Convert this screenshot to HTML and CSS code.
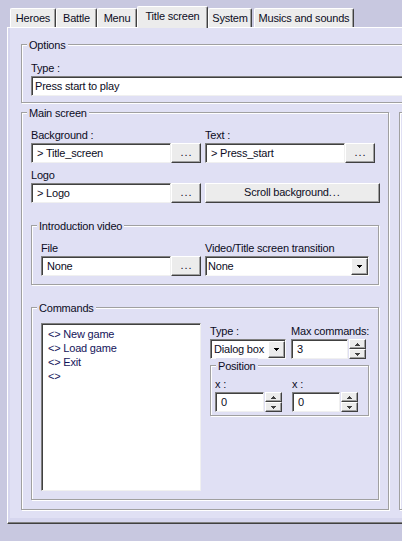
FILE: index.html
```html
<!DOCTYPE html>
<html lang="en">
<head>
<meta charset="utf-8">
<title>Title screen</title>
<link rel="stylesheet" href="styles.css">
</head>
<body>
<div class="window">
  <div class="tabs">
    <div class="tab t-heroes">Heroes</div>
    <div class="tab t-battle">Battle</div>
    <div class="tab t-menu">Menu</div>
    <div class="tab t-title sel">Title screen</div>
    <div class="tab t-system">System</div>
    <div class="tab t-musics">Musics and sounds</div>
  </div>
  <div class="panel">
    <div class="group g-options">
      <span class="legend">Options</span>
      <div class="label">Type :</div>
      <div class="input plain wide">Press start to play</div>
    </div>
    <div class="mainrow">
      <div class="group g-main">
        <span class="legend">Main screen</span>
        <div class="grid2">
          <div class="field">
            <div class="label">Background :</div>
            <div class="picker"><div class="input pick">&gt; Title_screen</div><div class="btn dots">...</div></div>
          </div>
          <div class="field">
            <div class="label">Text :</div>
            <div class="picker"><div class="input pick">&gt; Press_start</div><div class="btn dots">...</div></div>
          </div>
          <div class="field">
            <div class="label">Logo</div>
            <div class="picker"><div class="input pick">&gt; Logo</div><div class="btn dots">...</div></div>
          </div>
          <div class="field end">
            <div class="btn scroll">Scroll background<span class="ell">...</span></div>
          </div>
        </div>
        <div class="group g-intro">
          <span class="legend">Introduction video</span>
          <div class="grid-intro">
            <div class="field">
              <div class="label">File</div>
              <div class="picker"><div class="input pick file">None</div><div class="btn dots">...</div></div>
            </div>
            <div class="field">
              <div class="label">Video/Title screen transition</div>
              <div class="select s-trans"><span class="val">None</span><span class="dd"><svg width="5" height="3" viewBox="0 0 5 3"><path d="M0 0h5v1h-1v1h-1v1h-1v-1h-1v-1h-1z"/></svg></span></div>
            </div>
          </div>
        </div>
        <div class="group g-commands">
          <span class="legend">Commands</span>
          <div class="cmd-body">
            <div class="list">
              <div class="item">&lt;&gt; New game</div>
              <div class="item">&lt;&gt; Load game</div>
              <div class="item">&lt;&gt; Exit</div>
              <div class="item">&lt;&gt;</div>
            </div>
            <div class="cmd-side">
              <div class="cmd-top">
                <div class="field">
                  <div class="label">Type :</div>
                  <div class="select s-type"><span class="val">Dialog box</span><span class="dd"><svg width="5" height="3" viewBox="0 0 5 3"><path d="M0 0h5v1h-1v1h-1v1h-1v-1h-1v-1h-1z"/></svg></span></div>
                </div>
                <div class="field">
                  <div class="label">Max commands:</div>
                  <div class="spin s-max">
                    <div class="input pick">3</div>
                    <div class="arrows">
                      <span class="arr"><svg width="5" height="3" viewBox="0 0 5 3"><path d="M2 0h1v1h1v1h1v1h-5v-1h1v-1h1z"/></svg></span>
                      <span class="arr"><svg width="5" height="3" viewBox="0 0 5 3"><path d="M0 0h5v1h-1v1h-1v1h-1v-1h-1v-1h-1z"/></svg></span>
                    </div>
                  </div>
                </div>
              </div>
              <div class="group g-pos">
                <span class="legend">Position</span>
                <div class="pos-grid">
                  <div class="field">
                    <div class="label">x :</div>
                    <div class="spin s-x1">
                      <div class="input pick">0</div>
                      <div class="arrows">
                        <span class="arr"><svg width="5" height="3" viewBox="0 0 5 3"><path d="M2 0h1v1h1v1h1v1h-5v-1h1v-1h1z"/></svg></span>
                        <span class="arr"><svg width="5" height="3" viewBox="0 0 5 3"><path d="M0 0h5v1h-1v1h-1v1h-1v-1h-1v-1h-1z"/></svg></span>
                      </div>
                    </div>
                  </div>
                  <div class="field">
                    <div class="label">x :</div>
                    <div class="spin s-x2">
                      <div class="input pick">0</div>
                      <div class="arrows">
                        <span class="arr"><svg width="5" height="3" viewBox="0 0 5 3"><path d="M2 0h1v1h1v1h1v1h-5v-1h1v-1h1z"/></svg></span>
                        <span class="arr"><svg width="5" height="3" viewBox="0 0 5 3"><path d="M0 0h5v1h-1v1h-1v1h-1v-1h-1v-1h-1z"/></svg></span>
                      </div>
                    </div>
                  </div>
                </div>
              </div>
            </div>
          </div>
        </div>
      </div>
      <div class="group g-side"></div>
    </div>
  </div>
</div>
</body>
</html>
```
FILE: styles.css
```css
html, body {
  margin: 0;
  overflow: hidden;
}
body {
  width: 402px;
  height: 541px;
  background: #c8c8e0;
  font-family: "Liberation Sans", Arial, sans-serif;
  font-size: 11px;
  letter-spacing: -0.2px;
  color: #0c0c24;
}
.window {
  width: 540px;
  padding-top: 6px;
}

/* tabs */
.tabs {
  display: flex;
  align-items: flex-end;
  height: 21px;
  padding-left: 10px;
}
.tab {
  box-sizing: border-box;
  height: 19px;
  padding-top: 1px;
  line-height: 16px;
  text-align: center;
  white-space: nowrap;
  background: #ececec;
  border-top: 1px solid #fff;
  border-left: 1px solid #fff;
  border-right: 1px solid #404040;
  box-shadow: inset -1px 0 #a0a0a0;
  border-radius: 2px 2px 0 0;
}
.t-heroes { width: 46px; }
.t-battle { width: 41px; }
.t-menu { width: 40px; }
.t-title { width: 71px; }
.t-system { width: 44px; }
.t-musics { width: 100px; margin-left: 2px; }
.tab.sel {
  height: 22px;
  margin-bottom: -1px;
  position: relative;
  z-index: 1;
}

/* panel */
.panel {
  margin-left: 7px;
  padding: 16px 0 13px 13px;
  background: #e0e0f4;
  border-top: 1px solid #fff;
  border-left: 1px solid #fff;
  border-bottom: 1px solid #404040;
  box-shadow: inset 0 -1px #808080, inset 2px 0 #d6d6ee, inset 0 -5px #d6d6ee;
}

/* group boxes */
.group {
  position: relative;
  box-sizing: border-box;
  border: 1px solid #a0a0a0;
  box-shadow: inset 1px 1px #fff, 1px 1px #fff;
}
.legend {
  position: absolute;
  top: -8px;
  left: 5px;
  padding: 0 2px;
  line-height: 16px;
  background: #e0e0f4;
  white-space: nowrap;
}
.label {
  height: 16px;
  line-height: 16px;
  white-space: nowrap;
}

.g-options {
  padding: 15px 0 6px 9px;
}
.mainrow {
  display: flex;
  gap: 10px;
  margin-top: 9px;
}
.g-main {
  width: 368px;
  padding: 14px 8px 9px 9px;
}
.g-side {
  width: 120px;
}
.grid2 {
  display: grid;
  grid-template-columns: 170px 175px;
  column-gap: 4px;
  row-gap: 4px;
}
.field.end {
  display: flex;
  align-items: flex-end;
}

/* inputs */
.input {
  box-sizing: border-box;
  height: 20px;
  line-height: 18px;
  background: #fff;
  border: 1px solid;
  border-color: #808080 #f0f0f0 #f0f0f0 #808080;
  box-shadow: inset 1px 1px #404040;
  padding: 0 3px;
  white-space: nowrap;
  overflow: hidden;
}
.input.wide { width: 480px; }
.input.pick { padding-left: 5px; }
.picker {
  display: flex;
}
.picker .input { width: 140px; }
.picker .input.file { width: 130px; }

/* buttons */
.btn {
  box-sizing: border-box;
  height: 20px;
  background: #ececec;
  border: 1px solid;
  border-color: #fff #404040 #404040 #fff;
  box-shadow: inset -1px -1px #a0a0a0;
  text-align: center;
  line-height: 17px;
  white-space: nowrap;
}
.btn.dots {
  width: 30px;
  letter-spacing: 1px;
  padding-left: 1px;
}
.ell { letter-spacing: 1px; }
.btn.scroll { width: 175px; }

/* intro */
.g-intro {
  width: 348px;
  margin-top: 22px;
  padding: 14px 9px 8px 9px;
}
.grid-intro {
  display: grid;
  grid-template-columns: 160px 164px;
  column-gap: 4px;
}

/* select */
.select {
  box-sizing: border-box;
  height: 20px;
  display: flex;
  background: #fff;
  border: 1px solid;
  border-color: #808080 #f8f8f8 #f8f8f8 #808080;
  box-shadow: inset 1px 1px #404040;
  padding: 1px 0 0 1px;
}
.select .val {
  flex: 1;
  line-height: 17px;
  padding-left: 1px;
  white-space: nowrap;
}
.select .dd {
  box-sizing: border-box;
  width: 17px;
  height: 17px;
  display: flex;
  align-items: center;
  justify-content: center;
  background: #ececec;
  border: 1px solid;
  border-color: #fff #404040 #404040 #fff;
  box-shadow: inset -1px -1px #a0a0a0;
}
.select .dd svg { fill: #000; display: block; }
.s-trans { width: 164px; }
.s-type { width: 76px; }
.s-type .val { padding-left: 2px; }

/* commands */
.g-commands {
  width: 348px;
  margin-top: 22px;
  padding: 15px 9px 8px 9px;
}
.cmd-body {
  display: flex;
  gap: 9px;
}
.list {
  box-sizing: border-box;
  width: 160px;
  height: 168px;
  background: #fff;
  border: 1px solid;
  border-color: #808080 #f0f0f0 #f0f0f0 #808080;
  box-shadow: inset 1px 1px #404040;
  padding: 3px 0 0 6px;
  color: #14145a;
}
.item {
  line-height: 14px;
  white-space: nowrap;
}
.cmd-side {
  width: 159px;
}
.cmd-top {
  display: grid;
  grid-template-columns: 81px 78px;
}

/* spinners */
.spin {
  display: flex;
  height: 20px;
}
.spin .input { flex: 1; }
.arrows {
  width: 17px;
  margin-left: 1px;
  display: flex;
  flex-direction: column;
}
.arr {
  box-sizing: border-box;
  height: 10px;
  display: flex;
  align-items: center;
  justify-content: center;
  background: #ececec;
  border: 1px solid;
  border-color: #fff #404040 #404040 #fff;
  box-shadow: inset -1px -1px #a0a0a0;
}
.arr svg { fill: #404040; display: block; }
.s-max { width: 75px; }

.g-pos {
  width: 159px;
  margin-top: 6px;
  padding: 10px 4px 3px 4px;
}
.pos-grid {
  display: grid;
  grid-template-columns: 77px 72px;
}
.s-x1 { width: 67px; }
.s-x2 { width: 66px; }
```
